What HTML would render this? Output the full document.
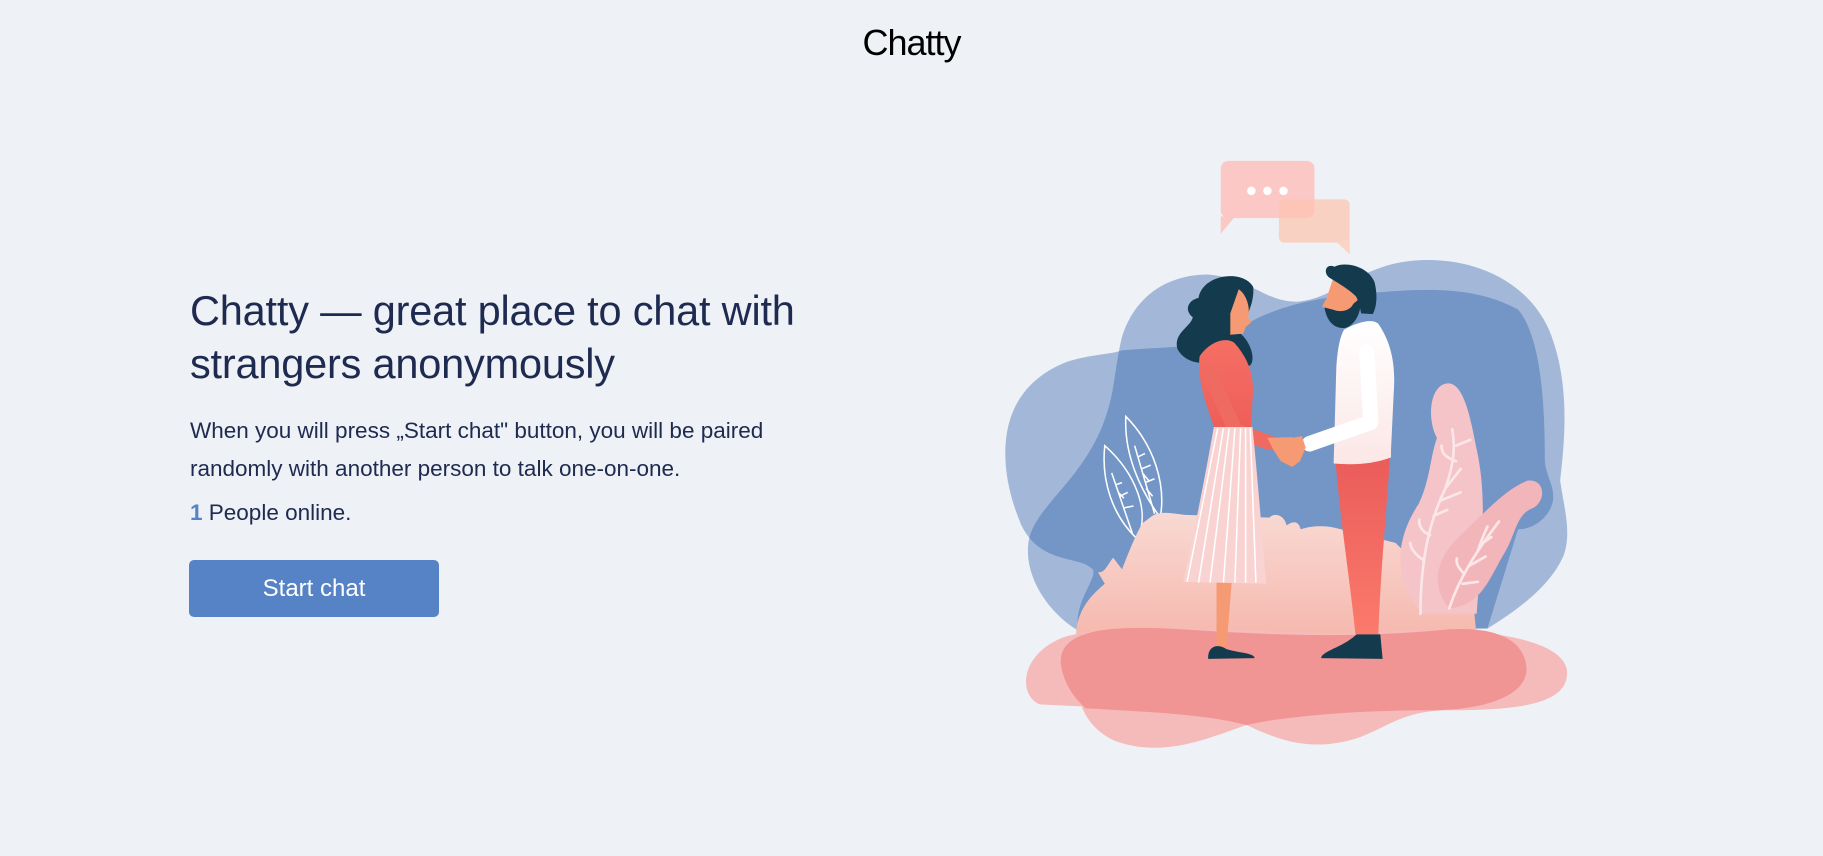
<!DOCTYPE html>
<html><head><meta charset="utf-8"><style>
html,body{margin:0;padding:0;width:1823px;height:856px;overflow:hidden;background:#eef1f5;font-family:"Liberation Sans",sans-serif;color:#1e2a4f}
.logo{position:absolute;left:0;width:1823px;top:22px;text-align:center;font-size:36px;color:#000;letter-spacing:-1px}
h1{position:absolute;left:190px;top:284px;margin:0;font-weight:normal;font-size:41.5px;line-height:53px;letter-spacing:-0.2px;width:660px}
p.d{position:absolute;left:190px;top:412px;margin:0;font-size:22.5px;line-height:38px;width:620px}
p.o{position:absolute;left:190px;top:500px;margin:0;font-size:22.5px}
p.o b{color:#5683c6;font-weight:bold}
.btn{position:absolute;left:189px;top:560px;width:250px;height:57px;background:#5683c6;border-radius:5px;color:#fff;font-size:24px;line-height:57px;text-align:center}
svg{position:absolute;left:990px;top:150px}
</style></head><body>
<div class="logo">Chatty</div>
<h1>Chatty — great place to chat with strangers anonymously</h1>
<p class="d">When you will press „Start chat" button, you will be paired randomly with another person to talk one-on-one.</p>
<p class="o"><b>1</b> People online.</p>
<div class="btn">Start chat</div>
<svg width="600" height="610" viewBox="0 0 1568 1568" preserveAspectRatio="none">
<defs>
<clipPath id="ca"><path d="M40,780 C40,650 110,580 200,545 C260,525 320,525 345,515 C450,505 560,510 620,480 C700,420 800,385 960,370 C1100,360 1250,340 1380,410 C1440,480 1450,650 1450,800 C1455,850 1490,880 1460,930 C1440,960 1410,975 1380,975 L1300,1230 L230,1235 C220,1160 275,1110 270,1080 C240,1040 130,1070 80,960 C55,900 40,840 40,780 Z"/></clipPath>
<linearGradient id="bush" x1="0" y1="0" x2="0" y2="1"><stop offset="0" stop-color="#f8d9d3"/><stop offset="1" stop-color="#f6b8ad"/></linearGradient>
<linearGradient id="top" x1="0" y1="0" x2="0" y2="1"><stop offset="0" stop-color="#f56f63"/><stop offset="1" stop-color="#ee5e5a"/></linearGradient>
<linearGradient id="pants" x1="0" y1="0" x2="0" y2="1"><stop offset="0" stop-color="#ea5b59"/><stop offset="1" stop-color="#fb7a6c"/></linearGradient>
<linearGradient id="sw" x1="0" y1="0" x2="0" y2="1"><stop offset="0" stop-color="#ffffff"/><stop offset="1" stop-color="#fbe7e6"/></linearGradient>
</defs>
<path fill="#a3b8d9" d="M40,780 C40,650 110,580 200,545 C260,525 320,525 345,515 C450,505 560,510 620,480 C700,420 800,385 960,370 C1100,360 1250,340 1380,410 C1440,480 1450,650 1450,800 C1455,850 1490,880 1460,930 C1440,960 1410,975 1380,975 L1300,1230 L230,1235 C220,1160 275,1110 270,1080 C240,1040 130,1070 80,960 C55,900 40,840 40,780 Z"/>
<path fill="#a3b8d9" d="M345,480 C380,370 470,320 570,320 C680,330 720,390 800,390 C900,385 960,300 1100,285 C1250,270 1400,330 1460,460 C1520,600 1500,760 1490,850 C1500,920 1520,980 1500,1040 C1470,1110 1400,1170 1300,1230 L230,1235 C170,1200 110,1130 100,1050 C95,990 110,960 180,880 C260,790 300,720 320,620 C330,560 335,520 345,480 Z"/>
<path clip-path="url(#ca)" fill="#7396c6" d="M345,480 C380,370 470,320 570,320 C680,330 720,390 800,390 C900,385 960,300 1100,285 C1250,270 1400,330 1460,460 C1520,600 1500,760 1490,850 C1500,920 1520,980 1500,1040 C1470,1110 1400,1170 1300,1230 L230,1235 C170,1200 110,1130 100,1050 C95,990 110,960 180,880 C260,790 300,720 320,620 C330,560 335,520 345,480 Z"/>
<g fill="none" stroke="#fff" stroke-width="4">
<path d="M300,760 C380,830 420,930 385,1000 C320,940 290,850 300,760 Z"/>
<path d="M318,830 L372,985 M330,860 L345,855 M340,890 L360,880 M350,920 L375,915 M335,880 L350,895"/>
<path d="M355,685 C430,760 460,860 445,945 C390,870 350,780 355,685 Z"/>
<path d="M378,760 L430,935 M385,790 L405,780 M395,820 L420,810 M405,855 L430,845 M398,830 L415,850 M408,870 L425,890"/>
</g>
<path fill="url(#bush)" d="M225,1250 C225,1180 270,1140 300,1115 L282,1085 C300,1090 310,1060 322,1048 L345,1078 C360,1040 380,990 398,960 L418,945 C440,925 480,935 510,938 L730,945 C745,930 770,940 775,965 C790,955 805,950 812,975 C840,965 880,965 905,972 L1060,1010 C1100,1050 1160,1100 1262,1150 L1272,1255 Z"/>
<path fill="#f4c4c8" d="M1130,1192 C1050,1100 1060,1000 1120,910 C1150,850 1150,790 1168,740 C1140,690 1150,600 1198,600 C1240,600 1258,700 1272,770 C1300,900 1285,1010 1272,1192 Z"/>
<path fill="#f2b6ba" d="M1200,1178 C1150,1120 1165,1050 1230,990 C1300,925 1350,870 1405,850 C1450,845 1455,900 1420,920 C1375,935 1375,985 1345,1035 C1305,1100 1285,1172 1200,1178 Z"/>
<g fill="none" stroke="#fbe6e8" stroke-width="7" stroke-linecap="round">
<path d="M1125,1192 C1125,1050 1150,950 1190,870 C1215,800 1215,760 1208,718"/>
<path d="M1190,870 L1230,820 M1218,760 L1255,745 M1218,800 C1190,790 1180,780 1180,760 M1160,940 L1195,925 M1150,990 C1125,980 1120,960 1122,950 M1135,1055 C1110,1040 1100,1025 1098,1010 M1180,900 L1230,880"/>
<path d="M1200,1178 C1230,1090 1280,1020 1330,955"/>
<path d="M1250,1070 L1295,1045 M1240,1090 C1220,1070 1218,1060 1220,1050 M1280,1015 L1310,995 M1275,1030 C1285,1000 1292,985 1300,968 M1235,1115 L1275,1110"/>
</g>
<path fill="#f5baba" d="M130,1425 C70,1400 80,1290 200,1250 C400,1200 700,1250 1000,1240 C1250,1220 1500,1250 1508,1340 C1512,1420 1400,1440 1200,1440 C1050,1440 1020,1510 900,1525 C800,1540 720,1500 670,1478 C550,1520 450,1560 330,1520 C280,1500 250,1460 240,1430 Z"/>
<path fill="#f19494" d="M185,1320 C180,1235 300,1220 500,1232 C800,1252 1000,1252 1200,1232 C1380,1222 1402,1300 1402,1335 C1402,1400 1300,1440 1150,1440 C1000,1440 800,1450 670,1478 C560,1450 420,1445 250,1435 C210,1400 190,1360 185,1320 Z"/>
<!-- woman -->
<path fill="#f59a72" d="M592,1105 L632,1105 L618,1280 L592,1282 Z"/>
<path fill="#143a4e" d="M570,1305 C570,1275 595,1268 618,1283 C650,1293 688,1292 692,1306 L570,1308 Z"/>
<path fill="#143a4e" d="M545,380 C555,320 660,305 688,352 C692,400 662,440 652,470 C685,495 695,545 678,555 L630,525 C600,550 520,565 490,512 C478,470 525,455 530,430 C505,410 520,385 545,380 Z"/>
<path fill="#f59a72" d="M650,358 C670,370 682,408 674,430 L684,442 L668,455 L662,472 L628,475 L628,420 Z"/>
<path fill="url(#top)" d="M548,530 C575,492 615,480 638,495 C678,538 692,585 686,642 L682,712 L588,718 C562,650 540,582 548,530 Z"/>
<path fill="none" stroke="#ef6a60" stroke-width="38" stroke-linecap="round" stroke-linejoin="round" d="M572,570 L642,722 L730,752"/>
<path fill="#f59a72" d="M725,740 L790,738 L825,765 L810,800 L790,815 L760,800 L740,770 Z"/>
<path fill="#f8d3d2" d="M585,712 L686,712 C700,850 712,1000 722,1115 L505,1110 C530,1000 560,850 585,712 Z"/>
<g stroke="#fff" stroke-width="4" fill="none"><path d="M595,715 L515,1110 M610,715 L545,1112 M625,715 L575,1112 M640,715 L610,1112 M655,715 L640,1112 M668,715 L668,1112 M680,715 L695,1112"/></g>
<!-- man -->
<path fill="url(#pants)" d="M903,800 L1045,782 C1040,900 1022,1050 1015,1245 L955,1245 C940,1100 915,950 903,800 Z"/>
<path fill="#143a4e" d="M865,1306 C870,1286 920,1280 958,1245 L1020,1245 L1026,1308 Z"/>
<path fill="url(#sw)" d="M925,462 C960,442 1000,432 1015,447 C1052,500 1060,560 1055,625 L1048,770 L1048,790 C1000,808 950,810 898,806 L905,560 C908,510 915,480 925,462 Z"/>
<path fill="none" stroke="#fff" stroke-width="40" stroke-linecap="round" stroke-linejoin="round" d="M985,520 L995,700 L835,755"/>
<path fill="#f59a72" d="M815,735 L790,740 L775,770 L790,800 L810,790 L825,765 Z"/>
<path fill="#f59a72" d="M895,335 C930,320 962,340 962,380 C962,420 944,445 922,440 L882,412 L868,402 L880,380 Z"/>
<path fill="#143a4e" d="M890,330 C870,320 875,290 900,300 C930,285 990,300 1005,340 C1015,380 1008,410 1000,422 L970,420 C965,395 960,380 955,375 C940,360 915,345 890,330 Z"/>
<path fill="#143a4e" d="M874,405 C880,440 900,462 930,457 C962,445 972,405 968,380 L950,395 C940,415 915,418 895,410 Z"/>
<rect x="603" y="28" width="245" height="147" rx="20" fill="#fcc8c5"/>
<path d="M603,170 L603,215 L637,175 Z" fill="#fcc8c5"/>
<rect x="755" y="127" width="185" height="111" rx="14" fill="#fdc3ae" opacity="0.7"/>
<path d="M905,236 L940,268 L940,230 Z" fill="#fdd3c3"/>
<circle cx="683" cy="105" r="11" fill="#fff"/><circle cx="725" cy="105" r="11" fill="#fff"/><circle cx="767" cy="105" r="11" fill="#fff"/>
</svg>
</body></html>
